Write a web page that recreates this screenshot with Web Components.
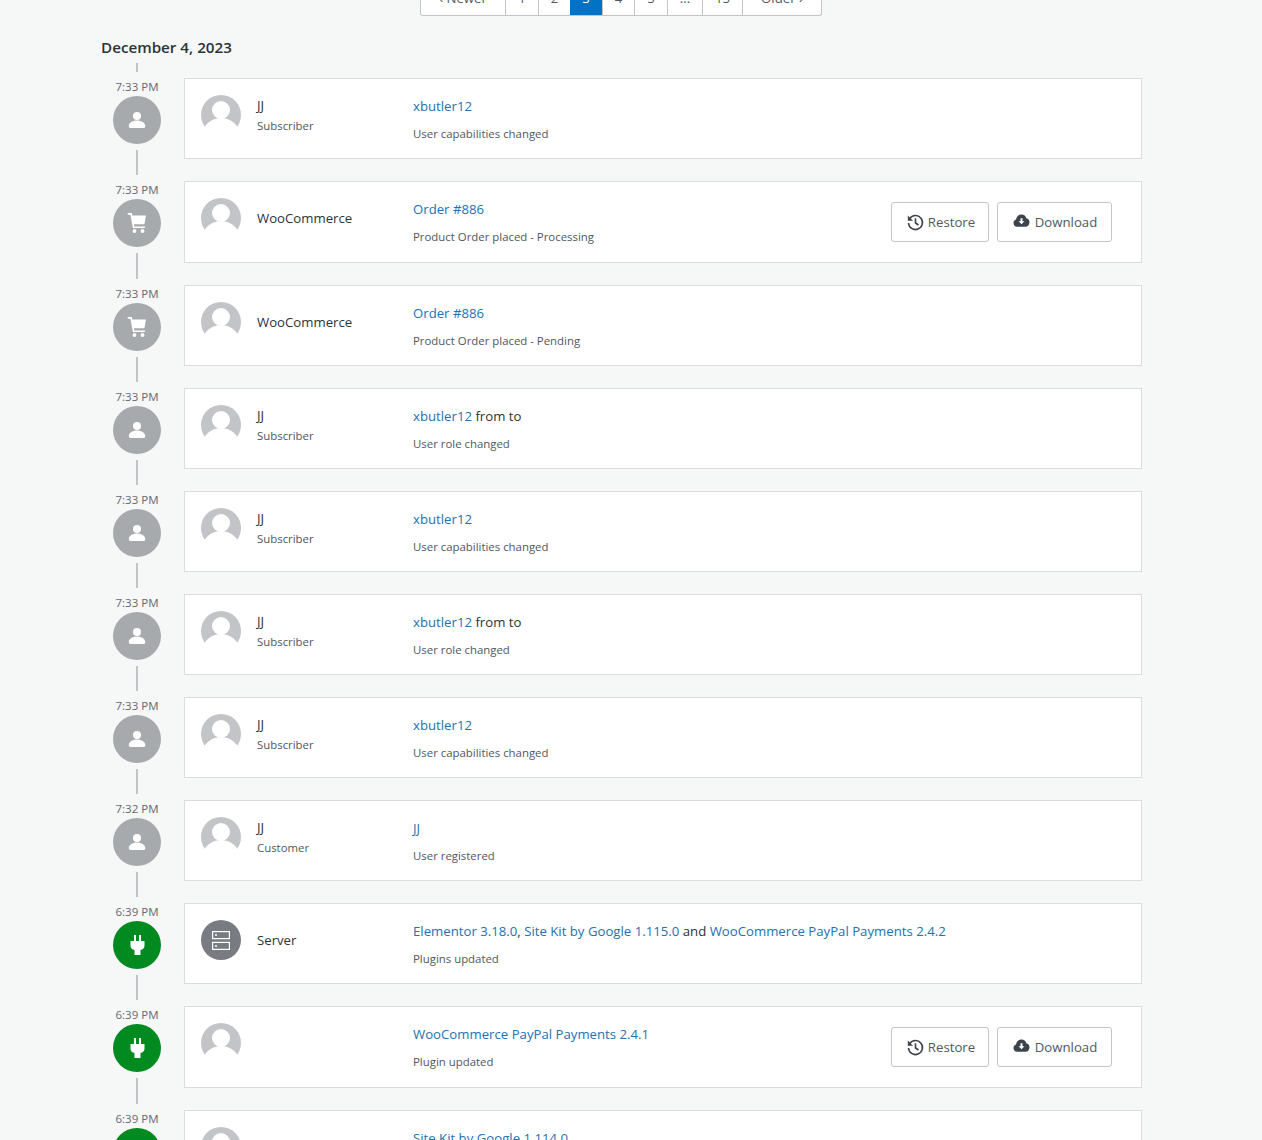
<!DOCTYPE html>
<html>
<head>
<meta charset="utf-8">
<title>Activity log</title>
<style>
  html, body { margin: 0; height: 1140px; overflow: hidden; background: #f6f7f7; }
  body { font-family: "Open Sans", "Noto Sans", sans-serif; color: #2c3338; }
</style>
</head>
<body>
<log-page>
  <log-pagination></log-pagination>
  <log-day label="December 4, 2023">
    <log-row time="7:33 PM" kind="user" name="JJ" role="Subscriber" sub="User capabilities changed"><a>xbutler12</a></log-row>
    <log-row time="7:33 PM" kind="cart" name="WooCommerce" sub="Product Order placed - Processing" actions><a>Order #886</a></log-row>
    <log-row time="7:33 PM" kind="cart" name="WooCommerce" sub="Product Order placed - Pending"><a>Order #886</a></log-row>
    <log-row time="7:33 PM" kind="user" name="JJ" role="Subscriber" sub="User role changed"><a>xbutler12</a> from to</log-row>
    <log-row time="7:33 PM" kind="user" name="JJ" role="Subscriber" sub="User capabilities changed"><a>xbutler12</a></log-row>
    <log-row time="7:33 PM" kind="user" name="JJ" role="Subscriber" sub="User role changed"><a>xbutler12</a> from to</log-row>
    <log-row time="7:33 PM" kind="user" name="JJ" role="Subscriber" sub="User capabilities changed"><a>xbutler12</a></log-row>
    <log-row time="7:32 PM" kind="user" name="JJ" role="Customer" sub="User registered"><a>JJ</a></log-row>
    <log-row time="6:39 PM" kind="plugin" name="Server" server sub="Plugins updated"><a>Elementor 3.18.0</a>, <a>Site Kit by Google 1.115.0</a> and <a>WooCommerce PayPal Payments 2.4.2</a></log-row>
    <log-row time="6:39 PM" kind="plugin" sub="Plugin updated" actions><a>WooCommerce PayPal Payments 2.4.1</a></log-row>
    <log-row time="6:39 PM" kind="plugin" sub="Plugin updated"><a>Site Kit by Google 1.114.0</a></log-row>
  </log-day>
</log-page>

<script>
const icons = {
  user: `<svg viewBox="0 0 24 24" width="24" height="24" fill="#fff"><circle cx="12" cy="8" r="4"/><path d="M3.800 18.200c0-3.400 3.700-5.700 8.200-5.700s8.300 2.300 8.300 5.700c0 1.200-.8 1.800-2 1.800H5.800c-1.200 0-2-.6-2-1.800z"/></svg>`,
  cart: `<svg viewBox="0 0 24 24" width="24" height="24" fill="#fff"><path d="M2.700 2h4.100l.5 2.600H21l-1.600 8.700H8.900l.4 2.100h10.600v1.700H7.900L5.400 3.700H2.700z"/><circle cx="9.500" cy="20" r="1.900"/><circle cx="17.500" cy="20" r="1.900"/></svg>`,
  plugin: `<svg viewBox="0 0 24 24" width="24" height="24" fill="#fff"><path d="M9 2h2v6H9zM14 2h2v6h-2zM5.500 8h14v4.500c0 2.500-1.500 4-4 4.500v5h-6v-5c-2.500-.5-4-2-4-4.500z"/></svg>`
};

const avatar = `<svg viewBox="0 0 40 40" width="40" height="40"><circle cx="20" cy="20" r="20" fill="#c3c4c7"/><circle cx="20" cy="15" r="9" fill="#fff"/><path d="M3 33C6 27 13 23 20 23s14 4 17 10V40H3z" fill="#fff"/></svg>`;

const serverAvatar = `<svg viewBox="0 0 40 40" width="40" height="40"><circle cx="20" cy="20" r="20" fill="#787c82"/><g fill="none" stroke="#fff" stroke-width="1.200"><rect x="11.600" y="11.600" width="16.800" height="7"/><rect x="11.600" y="22.400" width="16.800" height="7"/></g><circle cx="15" cy="15.100" r="1" fill="#fff"/><circle cx="15" cy="25.900" r="1" fill="#fff"/></svg>`;

const restoreIcon = `<svg viewBox="0 0 20 20" width="20" height="20"><g fill="none" stroke="#3c434a" stroke-width="1.600"><path d="M4.700 6.600A7 7 0 1 1 3.500 11"/><path d="M10.500 6.300v4.700l3 2"/></g><path fill="#3c434a" d="M2.800 3.600v5.200H8z"/></svg>`;

const downloadIcon = `<svg viewBox="0 0 20 20" width="20" height="20"><path fill="#3c434a" d="M9.500 2.500c2.500 0 4.400 1.600 4.800 3.800 1.900.3 3.200 1.900 3.200 3.900 0 2.500-1.800 4.500-4 4.500H5c-2 0-3.500-1.700-3.500-3.800 0-1.700 1-3.100 2.600-3.500C4.600 4.300 6.800 2.500 9.500 2.500z"/><path fill="#fff" d="M8.500 6.300h2v3h1.900l-2.900 3-2.900-3h1.900z"/></svg>`;

const paginationTemplate = document.createElement("template");
paginationTemplate.innerHTML = `
  <style>
    :host { display: flex; justify-content: center; height: 15px; padding-right: 1px; }
    .pages { display: flex; height: 36px; margin-top: -21px; border: 1px solid #c3c4c7; border-top: 0; border-radius: 0 0 3px 3px; background: #fff; font-size: 13.2px; line-height: 38px; color: #50575e; }
    .pages span { box-sizing: border-box; text-align: center; border-left: 1px solid #c3c4c7; }
    .pages span:first-child { border-left: 0; }
    .pages .on { background: #0073c6; color: #fff; border-left: 0; }
  </style>
  <div class="pages">
    <span style="width:84px">&lsaquo; Newer</span>
    <span style="width:33px">1</span>
    <span style="width:32px">2</span>
    <span class="on" style="width:32px">3</span>
    <span style="width:32px">4</span>
    <span style="width:33px">5</span>
    <span style="width:35px">...</span>
    <span style="width:40px">15</span>
    <span style="width:79px">Older &rsaquo;</span>
  </div>
`;

customElements.define(
  "log-pagination",
  class LogPagination extends HTMLElement {
    constructor() {
      super();
      this.attachShadow({ mode: "open" });
      this.shadowRoot.appendChild(paginationTemplate.content.cloneNode(true));
    }
  }
);

const pageTemplate = document.createElement("template");
pageTemplate.innerHTML = `
  <style>
    :host { display: block; padding: 0 120px 0 101px; }
  </style>
  <slot></slot>
`;

customElements.define(
  "log-page",
  class LogPage extends HTMLElement {
    constructor() {
      super();
      this.attachShadow({ mode: "open" });
      this.shadowRoot.appendChild(pageTemplate.content.cloneNode(true));
    }
  }
);

const dayTemplate = document.createElement("template");
dayTemplate.innerHTML = `
  <style>
    :host { display: block; }
    h2 { margin: 22px 0 0; font-size: 15.2px; line-height: 20px; font-weight: 600; color: #2c3338; }
    .stub { width: 2px; height: 9px; margin: 6px 0 6px 35px; background: #c3c4c7; }
  </style>
  <h2></h2>
  <div class="stub"></div>
  <slot></slot>
`;

customElements.define(
  "log-day",
  class LogDay extends HTMLElement {
    constructor() {
      super();
      this.attachShadow({ mode: "open" });
      this.shadowRoot.appendChild(dayTemplate.content.cloneNode(true));
    }

    connectedCallback() {
      this.shadowRoot.querySelector("h2").textContent = this.getAttribute("label");
    }
  }
);

const rowTemplate = document.createElement("template");
rowTemplate.innerHTML = `
  <style>
    :host { display: flex; align-items: stretch; font-size: 13.2px; }
    .rail { display: flex; flex-direction: column; align-items: center; width: 72px; flex: none; margin-right: 11px; }
    .time { height: 18px; line-height: 18px; font-size: 11.500px; color: #646970; white-space: nowrap; }
    .dot { width: 48px; height: 48px; border-radius: 50%; flex: none; display: flex; align-items: center; justify-content: center; background: #a7aaad; }
    .dot.plugin { background: #008a20; }
    .line { width: 2px; flex: 1; margin: 6px 0; background: #c3c4c7; }
    .card { flex: 1; min-width: 0; display: flex; align-items: flex-start; margin-bottom: 22px; padding: 16px 29px 16px 16px; border: 1px solid #dcdcde; background: #fff; }
    .avatar { width: 40px; height: 40px; flex: none; margin-right: 16px; }
    .who { width: 156px; flex: none; min-height: 40px; display: flex; flex-direction: column; justify-content: center; color: #2c3338; }
    .name { line-height: 20px; }
    .role { line-height: 20px; margin: 1px 0 -1px; font-size: 11.400px; color: #50575e; }
    .main { flex: 1; min-width: 0; }
    .head { line-height: 22px; margin-bottom: 9px; color: #2c3338; }
    .sub { line-height: 16px; font-size: 11.400px; color: #50575e; }
    .actions { display: none; gap: 8px; padding: 4px 0; }
    :host([actions]) .actions { display: flex; }
    .btn { box-sizing: border-box; display: flex; align-items: center; justify-content: center; gap: 3px; height: 40px; border: 1px solid #c3c4c7; border-radius: 3px; background: #fff; color: #50575e; }
    .btn.restore { width: 98px; }
    .btn.download { width: 115px; }
    ::slotted(a) { color: #2271b1; text-decoration: none; }
  </style>
  <div class="rail">
    <div class="time"></div>
    <div class="dot"></div>
    <div class="line"></div>
  </div>
  <div class="card">
    <div class="avatar"></div>
    <div class="who"><div class="name"></div><div class="role"></div></div>
    <div class="main">
      <div class="head"><slot></slot></div>
      <div class="sub"></div>
    </div>
    <div class="actions">
      <div class="btn restore">${restoreIcon}<span>Restore</span></div>
      <div class="btn download">${downloadIcon}<span>Download</span></div>
    </div>
  </div>
`;

customElements.define(
  "log-row",
  class LogRow extends HTMLElement {
    constructor() {
      super();
      this.attachShadow({ mode: "open" });
      this.shadowRoot.appendChild(rowTemplate.content.cloneNode(true));
    }

    connectedCallback() {
      const root = this.shadowRoot;
      const kind = this.getAttribute("kind");
      root.querySelector(".time").textContent = this.getAttribute("time");
      root.querySelector(".dot").innerHTML = icons[kind];
      root.querySelector(".dot").classList.add(kind);
      root.querySelector(".avatar").innerHTML = this.hasAttribute("server") ? serverAvatar : avatar;
      root.querySelector(".name").textContent = this.getAttribute("name") || "";
      const role = root.querySelector(".role");
      if (this.hasAttribute("role")) {
        role.textContent = this.getAttribute("role");
      } else {
        role.remove();
      }
      root.querySelector(".sub").textContent = this.getAttribute("sub");
    }
  }
);
</script>
</body>
</html>
